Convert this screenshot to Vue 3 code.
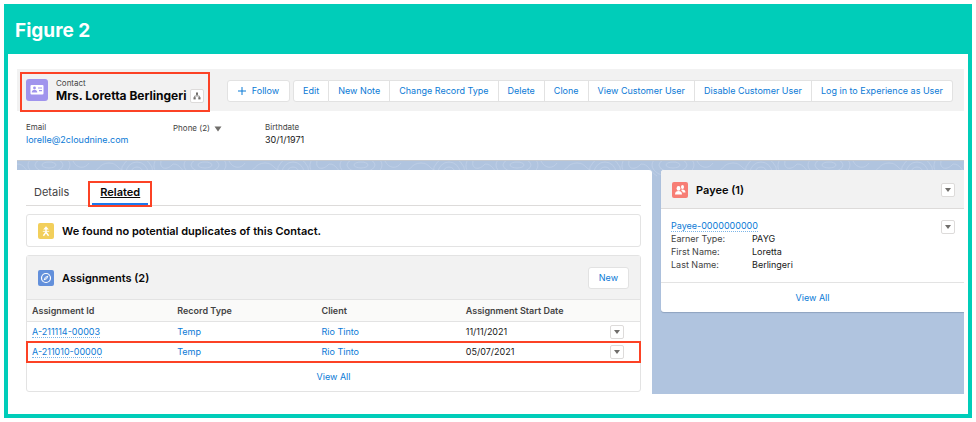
<script setup>
import { ref } from "vue";

const actions = ref([
  "Edit",
  "New Note",
  "Change Record Type",
  "Delete",
  "Clone",
  "View Customer User",
  "Disable Customer User",
  "Log in to Experience as User",
]);

const columns = ["Assignment Id", "Record Type", "Client", "Assignment Start Date"];

const assignments = ref([
  { id: "A-211114-00003", type: "Temp", client: "Rio Tinto", start: "11/11/2021" },
  { id: "A-211010-00000", type: "Temp", client: "Rio Tinto", start: "05/07/2021", marked: true },
]);

const payee = [
  { label: "Earner Type:", value: "PAYG" },
  { label: "First Name:", value: "Loretta" },
  { label: "Last Name:", value: "Berlingeri" },
];

const tab = ref("related");
</script>

<template>
  <div class="figure">
    <h1 class="figure-title">Figure 2</h1>
    <div class="figure-body">
      <div class="page">
        <header class="highlights">
          <div class="record-bar">
            <div class="record mark">
              <svg class="record-icon" viewBox="0 0 22 22">
                <rect width="22" height="22" rx="3" fill="#a094ed" />
                <rect x="4.500" y="6" width="13" height="9.500" rx="1" fill="#fff" />
                <circle cx="8.500" cy="9" r="1.400" fill="#a094ed" />
                <path d="M5.700 13.500c0-2 1.300-2.500 2.800-2.500s2.800.5 2.800 2.500z" fill="#a094ed" />
                <path d="M12 9h4M13 11.700h3" stroke="#a094ed" stroke-width="1.200" />
              </svg>
              <div class="record-name">
                <span class="label">Contact</span>
                <div class="name-row">
                  <h2>Mrs. Loretta Berlingeri</h2>
                  <button class="mini" aria-label="View hierarchy">
                    <svg width="8" height="8" viewBox="0 0 8 8" fill="#706e6b">
                      <rect x="3" y="0.500" width="2" height="2.400" />
                      <rect x="0.500" y="5.200" width="2.200" height="2.200" />
                      <rect x="5.300" y="5.200" width="2.200" height="2.200" />
                      <path d="M4 2.500v1.500M1.600 5.500V4h4.800v1.500" fill="none" stroke="#706e6b" stroke-width="0.700" />
                    </svg>
                  </button>
                </div>
              </div>
            </div>
            <div class="actions">
              <button class="btn follow">
                <svg width="8" height="8" viewBox="0 0 8 8"><path d="M4 0v8M0 4h8" stroke="#0b7ad6" /></svg>
                Follow
              </button>
              <div class="btn-group">
                <button class="btn" v-for="a in actions" :key="a">{{ a }}</button>
              </div>
            </div>
          </div>
          <div class="fields">
            <div>
              <div class="label">Email</div>
              <a href="#">lorelle@2cloudnine.com</a>
            </div>
            <div>
              <button class="phone label">
                Phone (2)
                <svg width="8" height="6" viewBox="0 0 8 6"><path d="M0.500 0.500h7L4 5.500z" fill="#706e6b" /></svg>
              </button>
            </div>
            <div>
              <div class="label">Birthdate</div>
              <div>30/1/1971</div>
            </div>
          </div>
        </header>

        <div class="content">
          <!-- contour lines behind the cards -->
          <svg class="contours" width="100%" height="34" aria-hidden="true">
            <defs>
              <pattern id="topo" width="156" height="34" patternUnits="userSpaceOnUse">
                <g fill="none" stroke="#c2d1e8" stroke-width="0.700">
                  <ellipse cx="32" cy="4" rx="7" ry="3" />
                  <ellipse cx="32" cy="4" rx="14" ry="7" />
                  <ellipse cx="32" cy="4" rx="21" ry="12" />
                  <path d="M0 3c8 0 8 7 16 12M56 0c4 8 12 8 16 2M74 12c8-2 8-10 18-10s8 8 18 8" />
                  <circle cx="120" cy="12" r="6" />
                  <circle cx="120" cy="12" r="11" />
                  <circle cx="120" cy="12" r="16" />
                  <path d="M138 0c-4 10 4 12 8 20M144 0c-2 8 6 10 12 3" />
                </g>
              </pattern>
            </defs>
            <rect width="100%" height="34" fill="url(#topo)" />
          </svg>

          <main class="main-card">
            <nav class="tabs">
              <a href="#" class="tab" :class="{ active: tab == 'details' }" @click.prevent="tab = 'details'">
                <span>Details</span>
              </a>
              <a href="#" class="tab mark" :class="{ active: tab == 'related' }" @click.prevent="tab = 'related'">
                <span>Related</span>
              </a>
            </nav>

            <section class="card duplicates">
              <svg class="icon" viewBox="0 0 16 16">
                <rect width="16" height="16" rx="2" fill="#f2cf5b" />
                <path d="M8 3.200l2.800 3.200H5.200z" fill="#fff" />
                <path d="M8 5v5M8 9.300l-2.600 3.400M8 9.300l2.600 3.400" fill="none" stroke="#fff" stroke-width="1.400" />
                <path d="M4.800 8.400h6.400" stroke="#fff" stroke-width="0.800" />
              </svg>
              <h3>We found no potential duplicates of this Contact.</h3>
            </section>

            <section class="card">
              <div class="card-head">
                <svg class="icon" viewBox="0 0 16 16">
                  <rect width="16" height="16" rx="2" fill="#6390db" />
                  <circle cx="8" cy="8" r="4.500" fill="none" stroke="#fff" stroke-width="1.200" />
                  <path d="M10.600 5.400L9 9l-3.600 1.600L7 7z" fill="#fff" />
                  <circle cx="8" cy="8" r="0.700" fill="#6390db" />
                </svg>
                <h3>Assignments (2)</h3>
                <button class="btn new">New</button>
              </div>
              <table>
                <thead>
                  <tr>
                    <th v-for="c in columns" :key="c">{{ c }}</th>
                    <th class="menu-col"></th>
                  </tr>
                </thead>
                <tbody>
                  <tr v-for="row in assignments" :key="row.id" :class="{ 'marked-row': row.marked }">
                    <td><a href="#" class="lookup">{{ row.id }}</a></td>
                    <td><a href="#">{{ row.type }}</a></td>
                    <td><a href="#">{{ row.client }}</a></td>
                    <td>{{ row.start }}</td>
                    <td class="menu-col">
                      <button class="mini" aria-label="Show actions">
                        <svg width="6" height="4" viewBox="0 0 6 4"><path d="M0 0h6L3 4z" fill="#706e6b" /></svg>
                      </button>
                    </td>
                  </tr>
                </tbody>
              </table>
              <a href="#" class="view-all">View All</a>
            </section>
          </main>

          <aside class="payee-card">
            <div class="payee-head">
              <svg class="icon" viewBox="0 0 16 16">
                <rect width="16" height="16" rx="2" fill="#f77e75" />
                <ellipse cx="6.500" cy="6.400" rx="1.900" ry="2.300" fill="#fff" />
                <path d="M3 12.500c0-2.700 1.500-3.500 3.500-3.500s3.500.8 3.500 3.500z" fill="#fff" />
                <ellipse cx="10.500" cy="5" rx="1.500" ry="1.900" fill="#fff" />
                <path d="M9.600 7.500c2.200-.4 3.900.5 3.900 2.900h-2.700c-.3-1-.8-1.500-1.600-1.800z" fill="#fff" />
              </svg>
              <h3>Payee (1)</h3>
              <button class="mini" aria-label="Payee actions">
                <svg width="6" height="4" viewBox="0 0 6 4"><path d="M0 0h6L3 4z" fill="#706e6b" /></svg>
              </button>
            </div>
            <div class="payee-body">
              <div>
                <a href="#" class="lookup">Payee-0000000000</a>
                <dl>
                  <template v-for="p in payee" :key="p.label">
                    <dt>{{ p.label }}</dt>
                    <dd>{{ p.value }}</dd>
                  </template>
                </dl>
              </div>
              <button class="mini" aria-label="Show actions">
                <svg width="6" height="4" viewBox="0 0 6 4"><path d="M0 0h6L3 4z" fill="#706e6b" /></svg>
              </button>
            </div>
            <a href="#" class="view-all">View All</a>
          </aside>
        </div>
      </div>
    </div>
  </div>
</template>

<style>
body {
  background: #fff;
}
</style>

<style scoped>
* {
  box-sizing: border-box;
}
.figure {
  margin: 4px;
  border: 4px solid #00cdb9;
  font-family: Inter, "Liberation Sans", sans-serif;
  font-size: 9px;
  line-height: 12px;
  color: #181818;
}
h1,
h2,
h3,
dl,
dd {
  margin: 0;
}
a {
  color: #0b7ad6;
  text-decoration: none;
}
button {
  font: inherit;
  cursor: pointer;
}
svg {
  display: block;
  flex-shrink: 0;
}
.figure-title {
  background: #00cdb9;
  color: #fff;
  font-size: 19px;
  line-height: 24px;
  padding: 11px 7px;
}
.figure-body {
  padding: 15px 4px 20px 9px;
}
.page {
  overflow: hidden;
}
.label {
  font-size: 8px;
  color: #444;
}
.mark {
  border: 2px solid #fc4225;
}

/* highlights panel */
.highlights {
  border-bottom: 1px solid #c5c9cf;
}
.record-bar {
  display: flex;
  justify-content: space-between;
  background: #f2f2f2;
  padding: 3px 11px 0 3px;
}
.record {
  display: flex;
  gap: 8px;
  height: 40px;
  margin-bottom: -1px;
  padding: 4px 4px 0;
}
.record-icon {
  width: 22px;
  height: 22px;
  margin-top: 1px;
}
.record-name .label {
  display: block;
  line-height: 11px;
}
.name-row {
  display: flex;
  align-items: center;
  gap: 4px;
}
h2 {
  font-size: 12px;
  line-height: 14px;
  color: #080707;
  white-space: nowrap;
}
.mini {
  display: flex;
  align-items: center;
  justify-content: center;
  width: 14px;
  height: 14px;
  padding: 0;
  background: #fff;
  border: 1px solid #dddbda;
  border-radius: 2px;
}
.actions {
  display: flex;
  gap: 3px;
  padding-top: 8px;
}
.btn {
  height: 22px;
  padding: 0 10px;
  background: #fff;
  border: 1px solid #e2e2e2;
  border-radius: 3px;
  color: #0b7ad6;
  white-space: nowrap;
}
.follow {
  display: flex;
  align-items: center;
  gap: 6px;
}
.btn-group {
  display: flex;
}
.btn-group .btn {
  padding: 0 9px;
  border-radius: 0;
}
.btn-group .btn + .btn {
  border-left: 0;
}
.btn-group .btn:first-child {
  border-radius: 3px 0 0 3px;
}
.btn-group .btn:last-child {
  border-radius: 0 3px 3px 0;
}
.fields {
  display: grid;
  grid-template-columns: 147px 92px 1fr;
  padding: 10px 9px 14px;
}
.fields .label {
  line-height: 13px;
}
.phone {
  display: flex;
  align-items: center;
  gap: 4px;
  padding: 1px 0;
  border: 0;
  background: none;
}

/* record content */
.content {
  position: relative;
  display: grid;
  grid-template-columns: 635fr 303fr;
  column-gap: 9px;
  align-items: start;
  padding-top: 9px;
  background: #b0c4df;
}
.contours {
  position: absolute;
  top: 0;
  left: 0;
}
.main-card,
.payee-card {
  position: relative;
  background: #fff;
}
.main-card {
  padding: 11px 11px 2px 9px;
  border-radius: 0 3px 0 0;
}
.tabs {
  display: flex;
  height: 25px;
  border-bottom: 1px solid #dddbda;
}
.tab {
  display: flex;
  height: 26px;
  padding: 0 2px;
  color: #444;
  font-size: 11px;
  line-height: 23px;
}
.tab span {
  padding: 0 6px;
}
.tab.mark {
  margin-left: 11px;
  line-height: 19px;
}
.tab.active {
  color: #080707;
  font-weight: 600;
  text-decoration: underline;
}
.tab.active span {
  border-bottom: 2px solid #1b78ee;
  padding: 0 8px;
}
.card {
  margin-top: 8px;
  border: 1px solid #e3e3e3;
  border-radius: 3px;
}
h3 {
  font-size: 11px;
  font-weight: 600;
  line-height: 14px;
  color: #080707;
}
.icon {
  width: 16px;
  height: 16px;
}
.duplicates {
  display: flex;
  align-items: center;
  gap: 8px;
  padding: 8px 11px 7px;
}
.card-head {
  display: flex;
  align-items: center;
  gap: 8px;
  padding: 11px 11px 10px;
  background: #f2f2f2;
}
.new {
  margin-left: auto;
}
table {
  width: 100%;
  table-layout: fixed;
  border-collapse: collapse;
}
th,
td {
  height: 20px;
  padding: 0 6px;
  text-align: left;
}
th:first-child,
td:first-child {
  padding-left: 5px;
}
th {
  height: 22px;
  background: #fafaf9;
  border-top: 1px solid #e3e3e3;
  border-bottom: 1px solid #e3e3e3;
  color: #444;
  font-weight: 600;
}
.menu-col {
  width: 36px;
}
.lookup {
  border-bottom: 1px dotted #7db6e8;
}
.marked-row {
  outline: 2px solid #fc4225;
  outline-offset: -1px;
}
.view-all {
  display: block;
  padding: 9px 0 8px;
  text-align: center;
}

/* related payee */
.payee-card {
  border-radius: 3px 0 0 3px;
  box-shadow: 0 1px 1px #8fa3bf;
}
.payee-head {
  display: flex;
  align-items: center;
  gap: 8px;
  padding: 12px 9px 10px 11px;
  background: #f2f2f2;
  border-bottom: 1px solid #dddbda;
  border-radius: 3px 0 0;
}
.payee-head .mini {
  margin-left: auto;
}
.payee-body {
  display: flex;
  justify-content: space-between;
  padding: 11px 9px 11px 10px;
}
dl {
  display: grid;
  grid-template-columns: 81px 1fr;
  line-height: 13px;
}
dt {
  color: #444;
}
.payee-card .view-all {
  border-top: 1px solid #e3e3e3;
}
</style>
